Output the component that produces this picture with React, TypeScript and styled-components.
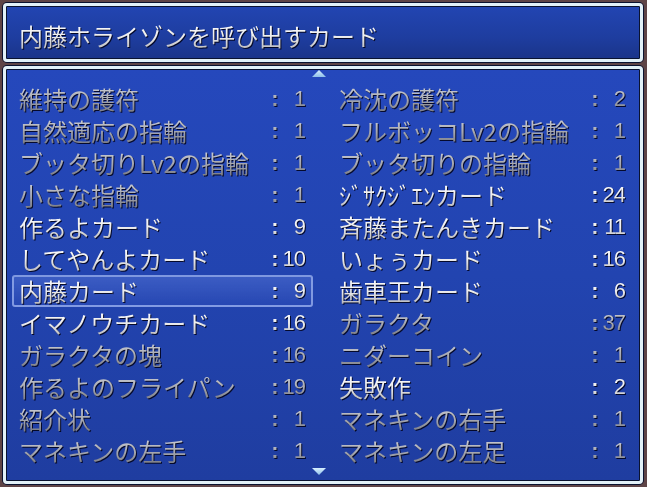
import React from 'react';
import styled, { createGlobalStyle, css } from 'styled-components';

const GlobalStyle = createGlobalStyle`
  html, body {
    margin: 0;
    padding: 0;
    background: #5e4446;
  }
  body {
    font-family: "Noto Sans CJK JP", "Noto Sans", sans-serif;
  }
`;

type Item = { name: string, count: number, enabled: boolean };

const items: Item[] = [
  { name: '維持の護符', count: 1, enabled: false },
  { name: '冷沈の護符', count: 2, enabled: false },
  { name: '自然適応の指輪', count: 1, enabled: false },
  { name: 'フルボッコLv2の指輪', count: 1, enabled: false },
  { name: 'ブッタ切りLv2の指輪', count: 1, enabled: false },
  { name: 'ブッタ切りの指輪', count: 1, enabled: false },
  { name: '小さな指輪', count: 1, enabled: false },
  { name: 'ｼﾞｻｸｼﾞｴﾝカード', count: 24, enabled: true },
  { name: '作るよカード', count: 9, enabled: true },
  { name: '斉藤またんきカード', count: 11, enabled: true },
  { name: 'してやんよカード', count: 10, enabled: true },
  { name: 'いょぅカード', count: 16, enabled: true },
  { name: '内藤カード', count: 9, enabled: true },
  { name: '歯車王カード', count: 6, enabled: true },
  { name: 'イマノウチカード', count: 16, enabled: true },
  { name: 'ガラクタ', count: 37, enabled: false },
  { name: 'ガラクタの塊', count: 16, enabled: false },
  { name: 'ニダーコイン', count: 1, enabled: false },
  { name: '作るよのフライパン', count: 19, enabled: false },
  { name: '失敗作', count: 2, enabled: true },
  { name: '紹介状', count: 1, enabled: false },
  { name: 'マネキンの右手', count: 1, enabled: false },
  { name: 'マネキンの左手', count: 1, enabled: false },
  { name: 'マネキンの左足', count: 1, enabled: false },
];

const SELECTED = 12;

const Screen = styled.div`
  width: 647px;
  height: 487px;
  box-sizing: border-box;
  padding: 3px 4px 3px 3px;
  display: flex;
  flex-direction: column;
  gap: 4px;
  overflow: hidden;
`;

const Window = styled.div`
  position: relative;
  box-sizing: border-box;
  width: 640px;
  border: 3px solid #e2f1f8;
  border-radius: 4px;
  box-shadow: 0 0 0 1px #0a1330, inset 0 0 0 1px #0a1330;
`;

const TitleWindow = styled(Window)`
  height: 59px;
  padding: 14px 13px 0;
  background: linear-gradient(180deg, #2245b2 0%, #1e3d9f 60%, #1a3489 100%);
`;

const ListWindow = styled(Window)`
  height: 418px;
  padding: 14px 6px 0;
  background: linear-gradient(180deg, #2548bc 0%, #2244b0 50%, #1f3da0 100%);
`;

const textLook = css<{ $dim?: boolean }>`
  background: ${({ $dim }) => ($dim
    ? 'linear-gradient(180deg, #d4d6dc 0%, #a4a6ae 55%, #72747e 100%)'
    : 'linear-gradient(180deg, #ffffff 0%, #eeeeee 50%, #b0b0b4 100%)')};
  -webkit-background-clip: text;
  background-clip: text;
  -webkit-text-fill-color: transparent;
  filter: drop-shadow(1px 1px 0 rgba(0, 0, 20, 0.85));
`;

const Title = styled.div<{ $dim?: boolean }>`
  display: inline-block;
  font-size: 24px;
  line-height: 32px;
  ${textLook}
`;

const Grid = styled.div`
  display: grid;
  grid-template-columns: 301px 301px;
  grid-auto-rows: 32px;
  column-gap: 19px;
`;

const Cell = styled.div<{ $selected?: boolean }>`
  display: flex;
  align-items: center;
  box-sizing: border-box;
  height: 32px;
  padding: 0 6px 0 5px;
  border-radius: 3px;
  border: 2px solid ${({ $selected }) => ($selected ? 'rgba(150, 172, 235, 0.8)' : 'transparent')};
  background: ${({ $selected }) => ($selected
    ? 'linear-gradient(180deg, rgba(120,150,240,0.3), rgba(60,90,200,0.2))'
    : 'transparent')};
`;

const Label = styled.span<{ $dim?: boolean }>`
  flex: 1;
  font-size: 24px;
  line-height: 30px;
  white-space: nowrap;
  ${textLook}
`;

const Colon = styled.span<{ $dim?: boolean }>`
  width: 10px;
  text-align: center;
  font-size: 22px;
  line-height: 30px;
  font-family: "Liberation Sans", sans-serif;
  font-weight: bold;
  ${textLook}
`;

const Count = styled.span<{ $dim?: boolean }>`
  width: 25px;
  text-align: right;
  font-size: 22px;
  line-height: 30px;
  letter-spacing: -1px;
  font-family: "Liberation Sans", sans-serif;
  ${textLook}
`;

const Arrow = styled.svg<{ $down?: boolean }>`
  position: absolute;
  left: 305px;
  width: 16px;
  height: 9px;
  ${({ $down }) => ($down ? 'top: 398px;' : 'top: 0px;')}
`;

function ScrollArrow({ down }: { down?: boolean }): JSX.Element {
  return (
    <Arrow $down={down} viewBox="0 0 16 9">
      <defs>
        <linearGradient id={down ? 'arrDown' : 'arrUp'} x1="0" y1="0" x2="0" y2="1">
          <stop offset="0" stopColor="#d8f0ff" />
          <stop offset="1" stopColor="#8fc0e8" />
        </linearGradient>
      </defs>
      <polygon
        points={down ? '1,1 15,1 8,8' : '8,1 15,8 1,8'}
        fill={`url(#${down ? 'arrDown' : 'arrUp'})`}
      />
    </Arrow>
  );
}

function App(): JSX.Element {
  return (
    <>
      <GlobalStyle />
      <Screen>
        <TitleWindow>
          <Title>内藤ホライゾンを呼び出すカード</Title>
        </TitleWindow>
        <ListWindow>
          <ScrollArrow />
          <Grid>
            {items.map((item, i) => (
              <Cell key={item.name} $selected={i === SELECTED}>
                <Label $dim={!item.enabled}>{item.name}</Label>
                <Colon $dim={!item.enabled}>:</Colon>
                <Count $dim={!item.enabled}>{item.count}</Count>
              </Cell>
            ))}
          </Grid>
          <ScrollArrow down />
        </ListWindow>
      </Screen>
    </>
  );
}

export default App;
